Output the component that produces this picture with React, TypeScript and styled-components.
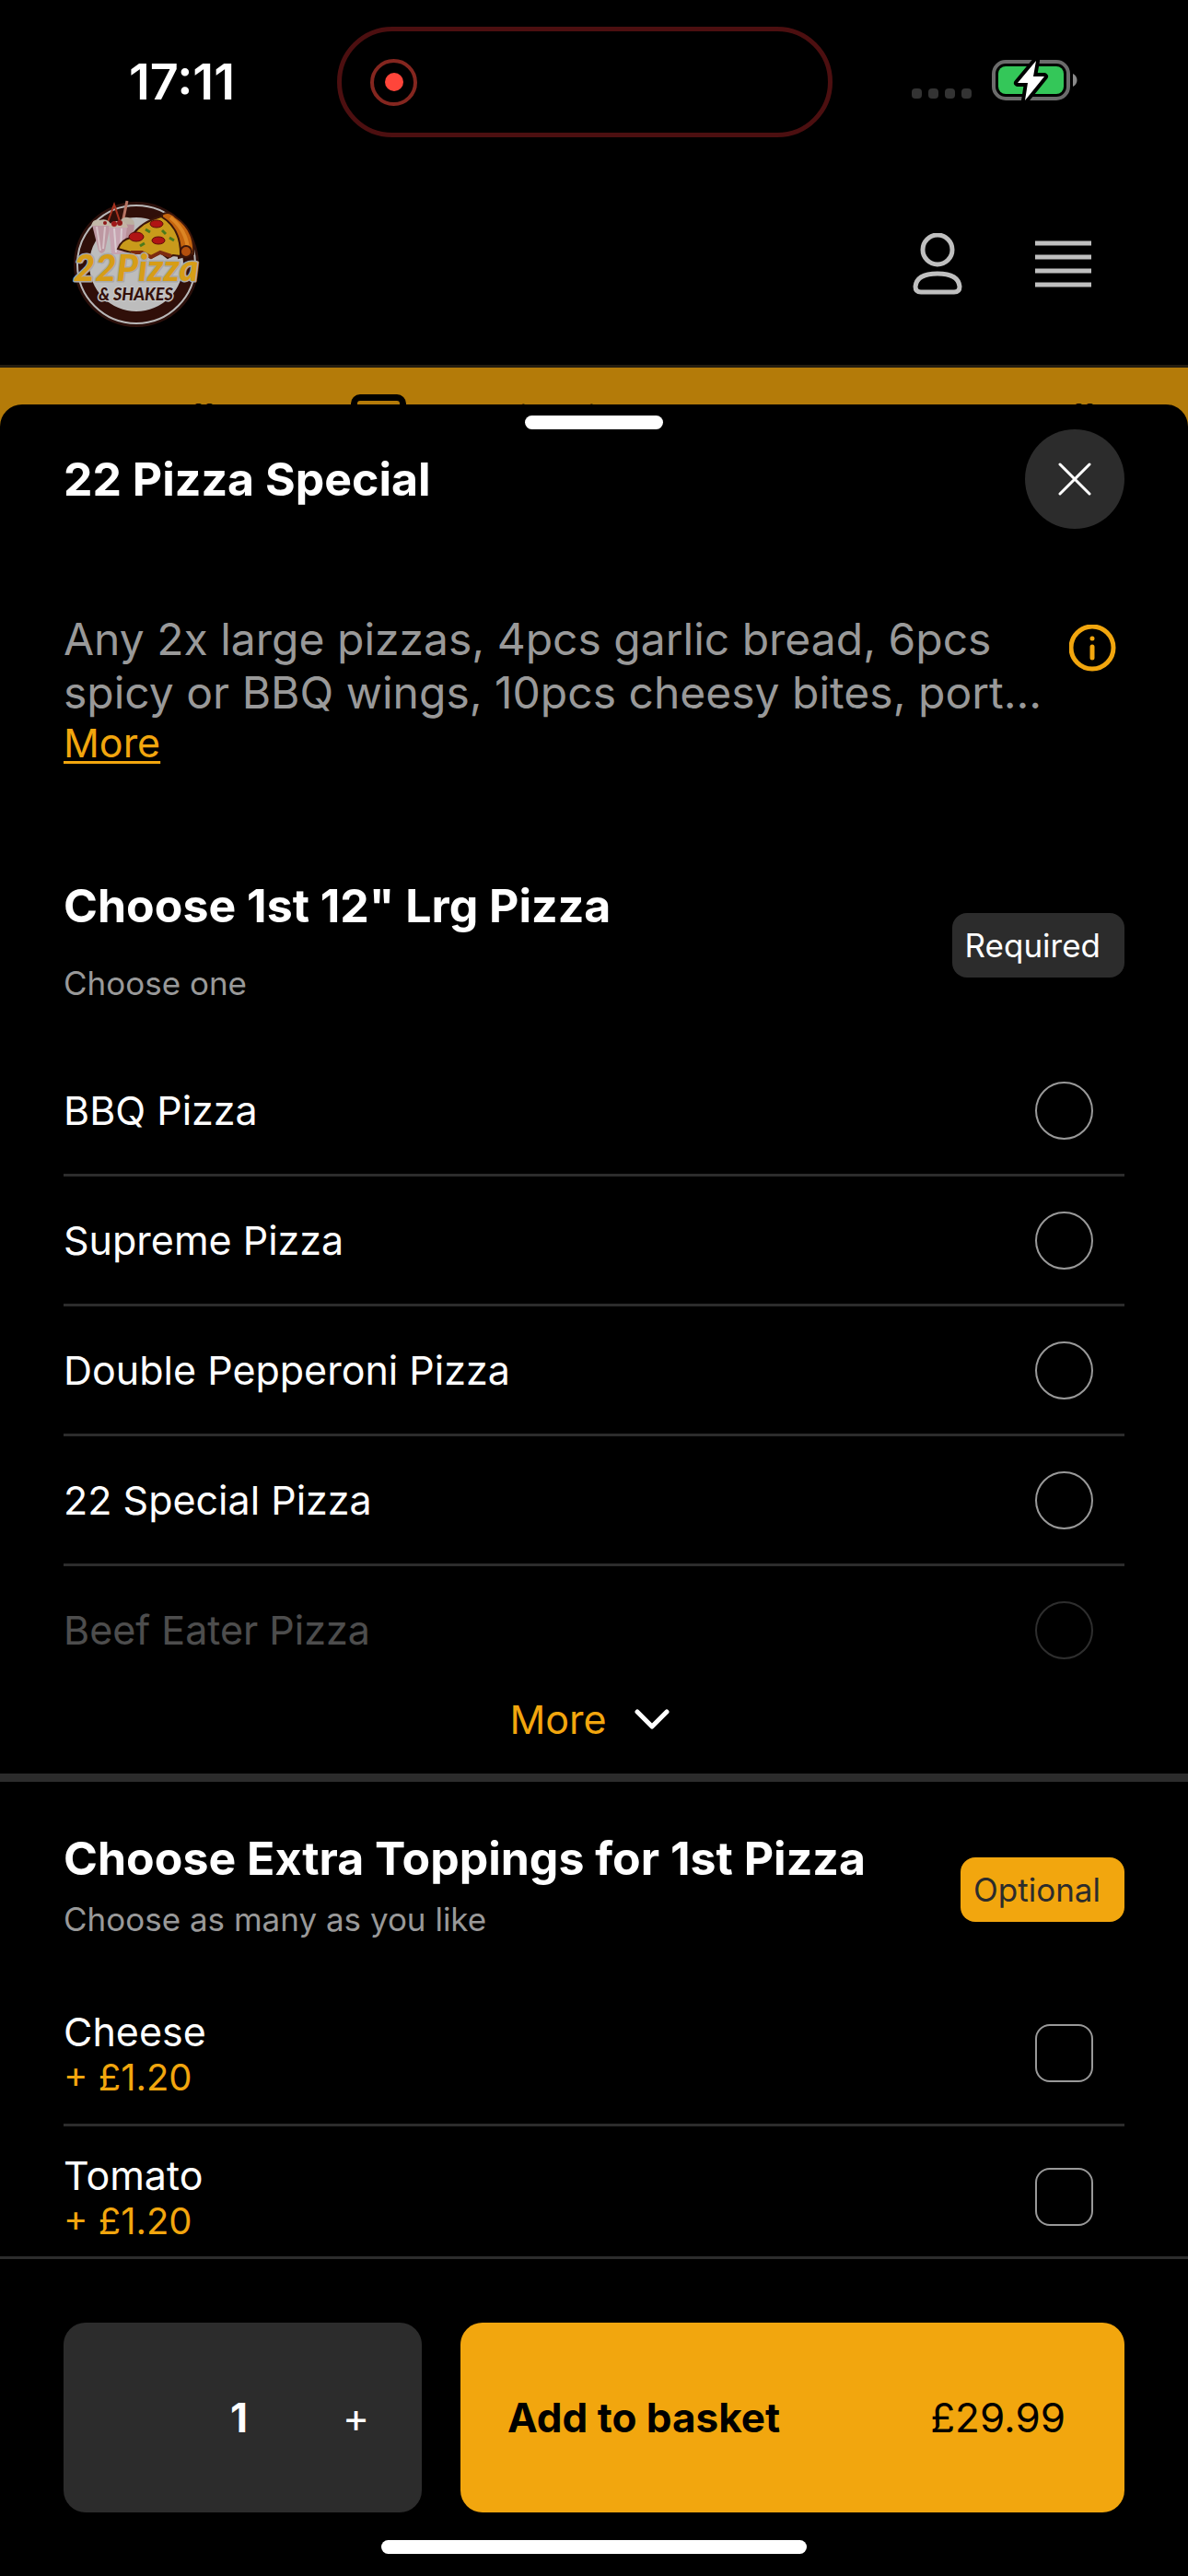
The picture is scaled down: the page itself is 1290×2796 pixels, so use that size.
import React, { useState } from 'react';
import styled, { createGlobalStyle } from 'styled-components';

const pizzas = [
    { id: "bbq", name: "BBQ Pizza" },
    { id: "supreme", name: "Supreme Pizza" },
    { id: "double-pepperoni", name: "Double Pepperoni Pizza" },
    { id: "22-special", name: "22 Special Pizza" },
    { id: "beef-eater", name: "Beef Eater Pizza", faded: true },
];

const toppings = [
    { id: "cheese", name: "Cheese", price: "+ £1.20" },
    { id: "tomato", name: "Tomato", price: "+ £1.20" },
];

const amber = '#f2a60e';
const grey = '#2c2c2c';

const GlobalStyle = createGlobalStyle`
  * { box-sizing: border-box; }
  body {
    margin: 0;
    background: #000;
    color: #fff;
    font-family: Inter, "Liberation Sans", sans-serif;
  }
  button, input { font: inherit; }
  button {
    border: 0;
    padding: 0;
    background: none;
    color: inherit;
    cursor: pointer;
  }
  h1, h2, p { margin: 0; }
  svg { display: block; }
`;

const Screen = styled.div`
  height: 100vh;
  display: flex;
  flex-direction: column;
  overflow: hidden;
`;

/* ---- status bar ---- */

const StatusBar = styled.div`
  flex: none;
  display: grid;
  grid-template-columns: 1fr auto 1fr;
  align-items: center;
  height: 178px;
  padding-right: 20px;
`;

const Time = styled.span`
  padding-left: 140px;
  font-size: 54px;
  line-height: 60px;
  font-weight: 600;
`;

const Island = styled.div`
  display: flex;
  align-items: center;
  width: 538px;
  height: 120px;
  padding-left: 31px;
  border: 5px solid #4c0f10;
  border-radius: 60px;
`;

const Record = styled.span`
  display: flex;
  align-items: center;
  justify-content: center;
  width: 51px;
  height: 51px;
  border: 4px solid #84261f;
  border-radius: 50%;

  &::before {
    content: '';
    width: 20px;
    height: 20px;
    border-radius: 50%;
    background: #ff453a;
  }
`;

const StatusIcons = styled.div`
  display: flex;
  justify-content: flex-end;
  align-items: center;
  gap: 22px;
  padding: 0 97px 4px 0;
`;

const Signal = styled.div`
  display: flex;
  gap: 7px;
  padding-top: 28px;

  span {
    width: 11px;
    height: 11px;
    border-radius: 4px;
    background: #333;
  }
`;

/* ---- page behind the sheet ---- */

const Header = styled.header`
  flex: none;
  display: flex;
  align-items: center;
  justify-content: space-between;
  height: 221px;
  padding: 0 105px 0 76px;
  border-bottom: 3px solid #241d10;
`;

const HeaderActions = styled.div`
  display: flex;
  align-items: center;
  gap: 79px;
`;

const Banner = styled.div`
  flex: none;
  display: flex;
  align-items: flex-start;
  height: 100px;
  padding: 29px 0 0 24px;
  background: #b47b09;
  color: #000;
  font-size: 36px;
  line-height: 50px;
  white-space: nowrap;
  overflow: hidden;
`;

const BannerText = styled.span`
  width: 357px;
  flex: none;
`;

const BannerNotice = styled.span`
  width: 508px;
  flex: none;
`;

const BannerIcon = styled.span`
  flex: none;
  width: 60px;
  height: 60px;
  margin-right: 31px;
  border: 7px solid #000;
  border-radius: 10px;
`;

/* ---- sheet ---- */

const Sheet = styled.main`
  position: relative;
  flex: 1;
  min-height: 0;
  display: flex;
  flex-direction: column;
  margin-top: -60px;
  border-radius: 24px 24px 0 0;
  background: #000;
`;

const Handle = styled.div`
  flex: none;
  align-self: center;
  width: 150px;
  height: 15px;
  margin-top: 12px;
  border-radius: 8px;
  background: #fff;
`;

const TitleBar = styled.div`
  flex: none;
  display: flex;
  align-items: center;
  justify-content: space-between;
  padding: 0 69px;
`;

const Title = styled.h1`
  font-size: 50px;
  line-height: 60px;
  font-weight: 700;
`;

const CloseButton = styled.button`
  display: flex;
  align-items: center;
  justify-content: center;
  width: 108px;
  height: 108px;
  border-radius: 50%;
  background: ${grey};
`;

const Content = styled.div`
  flex: 1;
  min-height: 0;
  overflow: hidden;
`;

const Intro = styled.section`
  display: grid;
  grid-template-columns: 1fr auto;
  column-gap: 10px;
  padding: 91px 78px 0 69px;
`;

const Description = styled.p`
  color: #999;
  font-size: 48px;
  line-height: 58px;
`;

const InfoButton = styled.button`
  align-self: start;
  padding-top: 13px;
`;

const MoreLink = styled.a`
  justify-self: start;
  color: ${amber};
  font-size: 43px;
  line-height: 50px;
  text-decoration: underline;
  text-decoration-thickness: 3px;
  text-underline-offset: 4px;
`;

const Group = styled.section<{ $first?: boolean }>`
  padding: ${p => p.$first ? '120px 69px 0' : '51px 69px 0'};
`;

const GroupHeader = styled.div`
  display: flex;
  align-items: center;
  justify-content: space-between;
`;

const GroupTitle = styled.h2`
  font-size: 50px;
  line-height: 64px;
  font-weight: 700;
`;

const GroupHint = styled.p<{ $spaced?: boolean }>`
  padding: ${p => p.$spaced ? '28px 0 10px' : '10px 0'};
  color: #999;
  font-size: 35px;
  line-height: 48px;
`;

const Badge = styled.span<{ $optional?: boolean }>`
  padding: 11px 26px 11px 14px;
  border-radius: 16px;
  background: ${p => p.$optional ? amber : grey};
  color: ${p => p.$optional ? grey : '#fff'};
  font-size: 35px;
  line-height: 48px;
`;

const OptionList = styled.div`
  padding-top: 35px;
`;

const Option = styled.label<{ $faded?: boolean; $tall?: boolean }>`
  display: flex;
  align-items: center;
  justify-content: space-between;
  height: ${p => p.$tall ? '156px' : '141px'};
  padding-right: 34px;
  border-bottom: 3px solid ${grey};
  cursor: pointer;

  ${p => p.$faded && `
    height: 138px;
    border-bottom: 0;
    opacity: 0.3;
  `}
`;

const OptionText = styled.span`
  display: flex;
  flex-direction: column;
`;

const OptionName = styled.span`
  font-size: 43px;
  line-height: 52px;
`;

const OptionPrice = styled.span`
  color: ${amber};
  font-size: 40px;
  line-height: 48px;
`;

const Tick = styled.input`
  appearance: none;
  flex: none;
  width: 63px;
  height: 63px;
  margin: 0;
  border: 2px solid #999;
  border-radius: ${p => p.type === 'radio' ? '50%' : '16px'};
  cursor: pointer;

  &:checked {
    border-color: ${amber};
    background: ${amber};
  }
`;

const ShowMore = styled.button`
  display: flex;
  align-items: center;
  justify-content: center;
  gap: 30px;
  width: 100%;
  height: 87px;
  padding: 0 0 32px;
  color: ${amber};
  font-size: 43px;
  line-height: 52px;
`;

const Divider = styled.hr`
  height: 9px;
  margin: 0;
  border: 0;
  background: ${grey};
`;

/* ---- footer ---- */

const Footer = styled.footer`
  flex: none;
  display: flex;
  flex-direction: column;
  align-items: center;
  padding-bottom: 24px;
  border-top: 3px solid ${grey};
`;

const FooterRow = styled.div`
  display: grid;
  grid-template-columns: 389fr 721fr;
  gap: 42px;
  width: 100%;
  padding: 69px 69px 30px;
`;

const Quantity = styled.div`
  display: grid;
  grid-template-columns: repeat(3, 1fr);
  align-items: center;
  height: 206px;
  padding-right: 8px;
  border-radius: 24px;
  background: ${grey};
  font-size: 44px;
  line-height: 52px;
  text-align: center;
`;

const Count = styled.output`
  grid-column: 2;
  font-weight: 700;
`;

const AddButton = styled.button`
  display: flex;
  align-items: center;
  justify-content: space-between;
  height: 206px;
  padding: 0 64px 0 51px;
  border-radius: 24px;
  background: ${amber};
  color: #000;
  font-size: 44px;
  line-height: 52px;

  strong { font-weight: 700; }
`;

const HomeBar = styled.div`
  width: 462px;
  height: 15px;
  border-radius: 8px;
  background: #fff;
`;

function Battery() {
    return (
        <svg width="96" height="50" viewBox="0 0 96 50" aria-label="Battery charging">
            <rect x="2" y="5" width="81" height="40" rx="13" fill="none" stroke="#6b6b6b" strokeWidth="4" />
            <path d="M88 18 C94 21 94 29 88 32 Z" fill="#8a8a8a" />
            <rect x="7" y="10" width="71" height="30" rx="8" fill="#34c759" />
            <path d="M48 4 L28 28 L39 28 L36 47 L57 21 L45 21 Z" fill="#fff" stroke="#000" strokeWidth="8" strokeLinejoin="round" paintOrder="stroke" />
        </svg>
    )
}

function Logo() {
    return (
        <svg width="146" height="146" viewBox="0 0 146 146" role="img" aria-label="22 Pizza & Shakes">
            <circle cx="72" cy="73" r="68" fill="#2c100b" />
            <circle cx="72" cy="73" r="64" fill="#300f09" stroke="#b9b9b9" strokeWidth="2" />
            <circle cx="72" cy="73" r="51" fill="#bdbdbd" />

            {/* milkshakes */}
            <path d="M41 27 L48 8 L54 26" fill="none" stroke="#a8321f" strokeWidth="2" />
            <path d="M57 28 L62 4" stroke="#b77463" strokeWidth="3" />
            <path d="M54 29 H70 L67 60 H57 Z" fill="#b88f98" />
            <path d="M24 30 H44 L38 58 Q34 64 31 58 Z" fill="#bd98a2" />
            <path d="M29 32 L33 58 M38 32 L36 56" stroke="#d5c2c7" strokeWidth="2" />
            <path d="M42 32 H62 L58 62 H45 Z" fill="#c7a4b1" />
            <path d="M48 34 L50 60 M56 34 L55 58" stroke="#d9cbd0" strokeWidth="2" />
            <path d="M23 31 Q25 23 32 25 Q42 22 45 31 Z" fill="#c2b8a8" />
            <path d="M53 29 Q57 20 63 22 Q70 23 70 30 Z" fill="#bbb0a0" />
            <path d="M42 33 Q44 25 52 26 Q61 25 63 33 Z" fill="#c4b3a5" />
            <circle cx="38" cy="28" r="2" fill="#8f1717" />
            <circle cx="48" cy="29" r="3" fill="#a01818" />
            <circle cx="54" cy="28" r="3" fill="#8f1717" />

            {/* slice */}
            <path d="M100 19 Q107 14 115 22 Q136 36 134 62 L118 66 Q118 36 100 22 Z" fill="#c5650f" stroke="#3d160a" strokeWidth="2" />
            <path d="M109 22 Q127 36 128 58" fill="none" stroke="#dc8524" strokeWidth="4" />
            <circle cx="126" cy="59" r="6" fill="#b4500e" stroke="#3d160a" strokeWidth="2" />
            <path d="M52 56 Q56 46 66 44 Q76 27 99 21 Q121 34 120 64 L112 63 L106 66 L98 60 L88 66 L78 60 L66 60 Z" fill="#c99a1b" stroke="#3d160a" strokeWidth="2" />
            <path d="M66 60 L78 60 L88 65 L98 60 L110 64" fill="none" stroke="#7d2b10" strokeWidth="4" />
            <ellipse cx="94" cy="29" rx="7" ry="4" fill="#b01414" stroke="#5d0c0a" />
            <ellipse cx="72" cy="43" rx="8" ry="5" fill="#b01414" stroke="#5d0c0a" />
            <ellipse cx="96" cy="47" rx="7" ry="4" fill="#b01414" stroke="#5d0c0a" />
            <path d="M82 35 l5 3 M100 36 l4 4 M108 44 l5 3 M76 53 l5 -3" stroke="#4b7a1c" strokeWidth="3" />

            <g fontFamily="Lato, sans-serif" fontStyle="italic" fontWeight="900" strokeLinejoin="round" paintOrder="stroke">
                <text x="4" y="91" fontSize="40" fill="#d79d17" stroke="#a9a9a9" strokeWidth="3">22Pizza</text>
                <text x="31" y="112" fontSize="18" fill="#35110a" stroke="#c4c4c4" strokeWidth="3">&amp; SHAKES</text>
            </g>
        </svg>
    )
}

function PersonIcon() {
    return (
        <svg width="54" height="68" viewBox="0 0 54 68" fill="none" stroke="#bfbfbf" strokeWidth="5">
            <circle cx="27" cy="18" r="16" />
            <path d="M9 64 Q3 64 3 58 C4 48 13 44 27 44 C41 44 50 48 51 58 Q51 64 45 64 Z" />
        </svg>
    )
}

function MenuIcon() {
    return (
        <svg width="61" height="52" viewBox="0 0 61 52" stroke="#bfbfbf" strokeWidth="5">
            <path d="M0 3 H61 M0 18 H61 M0 33 H61 M0 48 H61" />
        </svg>
    )
}

export default function App() {
    const [count, setCount] = useState(1);

    return (
        <>
            <GlobalStyle />
            <Screen>
                <StatusBar>
                    <Time>17:11</Time>
                    <Island><Record /></Island>
                    <StatusIcons>
                        <Signal><span /><span /><span /><span /></Signal>
                        <Battery />
                    </StatusIcons>
                </StatusBar>

                <Header>
                    <Logo />
                    <HeaderActions>
                        <button aria-label="Account"><PersonIcon /></button>
                        <button aria-label="Menu"><MenuIcon /></button>
                    </HeaderActions>
                </Header>

                <Banner>
                    <BannerText>Get 20% off</BannerText>
                    <BannerIcon />
                    <BannerNotice>Opening time at 20:00</BannerNotice>
                    <BannerText>Get 20% off</BannerText>
                </Banner>

                <Sheet>
                    <Handle />
                    <TitleBar>
                        <Title>22 Pizza Special</Title>
                        <CloseButton aria-label="Close">
                            <svg width="36" height="36" viewBox="0 0 36 36" stroke="#fff" strokeWidth="3" strokeLinecap="round">
                                <path d="M2 2 L34 34 M34 2 L2 34" />
                            </svg>
                        </CloseButton>
                    </TitleBar>

                    <Content>
                        <Intro>
                            <Description>
                                Any 2x large pizzas, 4pcs garlic bread, 6pcs spicy or BBQ wings, 10pcs cheesy bites, port...
                            </Description>
                            <InfoButton aria-label="Product information">
                                <svg width="51" height="51" viewBox="0 0 51 51" fill="none" stroke={amber} strokeWidth="5" strokeLinecap="round">
                                    <circle cx="25" cy="25" r="23" />
                                    <path d="M25 24 V36 M25 15 V15" />
                                </svg>
                            </InfoButton>
                            <MoreLink href="#more">More</MoreLink>
                        </Intro>

                        <Group $first>
                            <GroupHeader>
                                <div>
                                    <GroupTitle>Choose 1st 12" Lrg Pizza</GroupTitle>
                                    <GroupHint $spaced>Choose one</GroupHint>
                                </div>
                                <Badge>Required</Badge>
                            </GroupHeader>
                            <OptionList>
                                {
                                    pizzas.map((ele) => {
                                        return (
                                            <Option key={ele.id} $faded={ele.faded}>
                                                <OptionName>{ele.name}</OptionName>
                                                <Tick type="radio" name="pizza" value={ele.id} />
                                            </Option>
                                        )
                                    })
                                }
                            </OptionList>
                            <ShowMore>
                                More
                                <svg width="48" height="24" viewBox="0 0 48 24" fill="none" stroke="#fff" strokeWidth="5" strokeLinecap="round" strokeLinejoin="round">
                                    <path d="M3 4 L19 20 L35 4" />
                                </svg>
                            </ShowMore>
                        </Group>

                        <Divider />

                        <Group>
                            <GroupHeader>
                                <div>
                                    <GroupTitle>Choose Extra Toppings for 1st Pizza</GroupTitle>
                                    <GroupHint>Choose as many as you like</GroupHint>
                                </div>
                                <Badge $optional>Optional</Badge>
                            </GroupHeader>
                            <OptionList>
                                {
                                    toppings.map((ele) => {
                                        return (
                                            <Option key={ele.id} $tall>
                                                <OptionText>
                                                    <OptionName>{ele.name}</OptionName>
                                                    <OptionPrice>{ele.price}</OptionPrice>
                                                </OptionText>
                                                <Tick type="checkbox" name="toppings" value={ele.id} />
                                            </Option>
                                        )
                                    })
                                }
                            </OptionList>
                        </Group>
                    </Content>

                    <Footer>
                        <FooterRow>
                            <Quantity>
                                <Count>{count}</Count>
                                <button aria-label="Add one" onClick={() => setCount(count + 1)}>+</button>
                            </Quantity>
                            <AddButton>
                                <strong>Add to basket</strong>
                                <span>£29.99</span>
                            </AddButton>
                        </FooterRow>
                        <HomeBar />
                    </Footer>
                </Sheet>
            </Screen>
        </>
    )
}
